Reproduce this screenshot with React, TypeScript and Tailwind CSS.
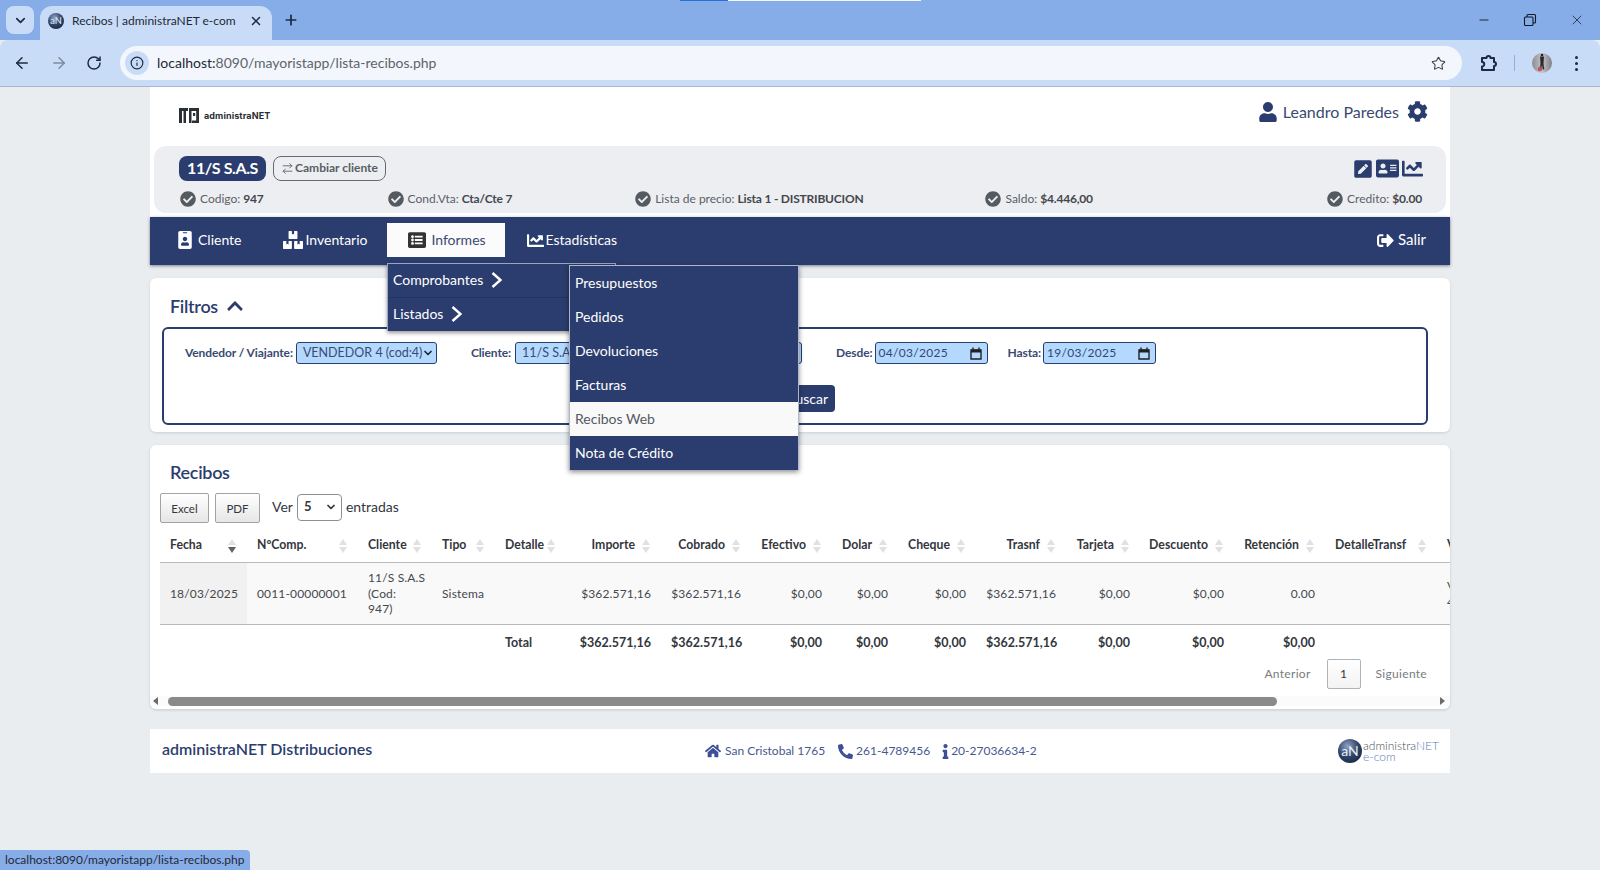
import React from "react";
import { ChevronDown, X, Plus, ArrowLeft, ArrowRight, ArrowRightLeft, RotateCw, Info, Star, Minus } from "lucide-react";
import { FaUser, FaCog, FaPenSquare, FaAddressCard, FaChartLine, FaCheckCircle, FaIdBadge, FaBoxes, FaListAlt, FaSignOutAlt, FaChevronUp, FaHome, FaPhoneAlt, FaInfo, FaSearch } from "react-icons/fa";

const Sphere = ({ size }: { size: number }) => (
  <svg width={size} height={size} viewBox="0 0 24 24" className="shrink-0">
    <defs>
      <radialGradient id={`sph${size}`} cx="0.4" cy="0.3" r="0.8">
        <stop offset="0" stopColor="#8fa3c4" />
        <stop offset="0.55" stopColor="#2f4468" />
        <stop offset="1" stopColor="#17243f" />
      </radialGradient>
    </defs>
    <circle cx="12" cy="12" r="12" fill={`url(#sph${size})`} />
    <text x="12" y="17" textAnchor="middle" fontSize="14" fill="#e8eef7" fontFamily="Lato, sans-serif">aN</text>
  </svg>
);

const Chevron = () => (
  <svg width="11" height="16" viewBox="0 0 11 16" fill="none" stroke="white" strokeWidth="2.4" className="shrink-0">
    <path d="M1.5 1l8 7-8 7" />
  </svg>
);

const Info2 = ({ label, value, className = "" }: { label: string; value: string; className?: string }) => (
  <div className={`flex items-center gap-[3px] text-[12px] text-[#5b6068] whitespace-nowrap ${className}`}>
    <FaCheckCircle className="text-[16px] text-[#555a60] mr-[1px]" />
    <span>{label} <b className="font-bold tracking-[-0.2px] text-[#43474d]">{value}</b></span>
  </div>
);

const NavItem = ({ icon, label, gap = "gap-[6px]" }: { icon: React.ReactNode; label: string; gap?: string }) => (
  <div className={`flex items-center ${gap} px-[20px] h-[34px] text-white text-[14px] whitespace-nowrap`}>
    {icon}
    <span className="-mt-[2px]">{label}</span>
  </div>
);

const columns: { label: string; width: number; right?: boolean }[] = [
  { label: "Fecha", width: 87 },
  { label: "NºComp.", width: 111 },
  { label: "Cliente", width: 74 },
  { label: "Tipo", width: 63 },
  { label: "Detalle", width: 71 },
  { label: "Importe", width: 95, right: true },
  { label: "Cobrado", width: 90, right: true },
  { label: "Efectivo", width: 81, right: true },
  { label: "Dolar", width: 66, right: true },
  { label: "Cheque", width: 78, right: true },
  { label: "Trasnf", width: 90, right: true },
  { label: "Tarjeta", width: 74, right: true },
  { label: "Descuento", width: 94, right: true },
  { label: "Retención", width: 91, right: true },
  { label: "DetalleTransf", width: 112 },
  { label: "V", width: 60 },
];

const rowCells: React.ReactNode[] = [
  "18/03/2025", "0011-00000001",
  <>11/S S.A.S<br />(Cod:<br />947)</>,
  "Sistema", "", "$362.571,16", "$362.571,16", "$0,00", "$0,00", "$0,00", "$362.571,16", "$0,00", "$0,00", "0.00", "",
  <>V<br />4</>,
];
const totalCells = ["", "", "", "", "Total", "$362.571,16", "$362.571,16", "$0,00", "$0,00", "$0,00", "$362.571,16", "$0,00", "$0,00", "$0,00", "", ""];

const Sort = ({ active }: { active?: boolean }) => (
  <span className="absolute right-[11px] top-[16px] flex flex-col gap-[2px]">
    <span className="block w-0 h-0 border-x-[4px] border-x-transparent border-b-[6px] border-b-[#dfe1e3]" />
    <span className={`block w-0 h-0 border-x-[4px] border-x-transparent border-t-[6px] ${active ? "border-t-[#5f6368]" : "border-t-[#dfe1e3]"}`} />
  </span>
);

const DateInput = ({ value }: { value: string }) => (
  <div className="w-[113px] h-[22px] bg-[#b3d9ff] border border-[#2b3d6e] rounded-[3px] flex items-center justify-between pl-[3px] pr-[5px] text-[12px] tracking-[0.3px] font-normal text-[#34466f]">
    <span>{value}</span>
    <svg width="12" height="13" viewBox="0 0 12 13" className="shrink-0">
      <path d="M1 3h10v9H1z" fill="none" stroke="#222" strokeWidth="1.4" />
      <path d="M1 2.5h10v3H1z" fill="#222" />
      <path d="M3 .5v2M9 .5v2" stroke="#222" strokeWidth="1.4" />
    </svg>
  </div>
);

const subItems = ["Presupuestos", "Pedidos", "Devoluciones", "Facturas", "Recibos Web", "Nota de Crédito"];

export default function App() {
  return (
    <div className="relative w-[1600px] h-[870px] overflow-hidden flex flex-col bg-[#e9edf0] [font-family:Lato,sans-serif] text-[#2b3d6e]">
      {/* Tab strip */}
      <div className="relative h-[40px] bg-[#87ade9] flex items-start shrink-0 [font-family:'Open_Sans',sans-serif]">
        <div className="absolute left-[680px] top-0 h-[1px] w-[48px] bg-[#2a6fd6]" />
        <div className="absolute left-[728px] top-0 h-[1px] w-[193px] bg-[#f2f6fc]" />
        <div className="ml-[6px] mt-[6px] w-[28px] h-[28px] rounded-lg bg-[#c9dcf7] flex items-center justify-center">
          <ChevronDown size={15} strokeWidth={2.6} className="text-[#1c2a3f]" />
        </div>
        <div className="ml-[6px] mt-[6px] w-[232px] h-[34px] rounded-t-xl bg-[#c9dcf7] flex items-center pl-[8px] pr-[9px] pb-[4px]">
          <Sphere size={16} />
          <span className="ml-[8px] text-[12px] text-[#1f2937] whitespace-nowrap flex-1">Recibos | administraNET e-com</span>
          <X size={14} strokeWidth={2.6} className="text-[#1c2a3f]" />
        </div>
        <Plus size={16} strokeWidth={2.6} className="ml-[11px] mt-[12px] text-[#1c2a3f]" />
        <div className="ml-auto flex items-center h-[40px] pr-[15px] gap-[32px] text-[#111827]">
          <Minus size={14} strokeWidth={1.5} />
          <svg width="14" height="14" viewBox="0 0 14 14" fill="none" stroke="#111827" strokeWidth="1.1">
            <rect x="1.5" y="4" width="8.5" height="8.5" rx="1" />
            <path d="M4 4V2.5a1 1 0 0 1 1-1h6.5a1 1 0 0 1 1 1V9a1 1 0 0 1-1 1H10" />
          </svg>
          <X size={16} strokeWidth={1.1} />
        </div>
      </div>
      {/* Toolbar */}
      <div className="h-[47px] shrink-0 bg-[#c9dcf7] border-b border-[#a9b5c8] rounded-tl-lg rounded-tr-lg flex items-center [font-family:'Open_Sans',sans-serif]">
        <ArrowLeft size={18} strokeWidth={2} className="ml-[13px] text-[#1c2a3f]" />
        <ArrowRight size={18} strokeWidth={2} className="ml-[19px] text-[#7d8ba0]" />
        <RotateCw size={16} strokeWidth={2.2} className="ml-[18px] text-[#1c2a3f]" />
        <div className="ml-[18px] w-[1342px] h-[34px] rounded-full bg-[#f3f7fd] flex items-center pl-[5px] pr-[16px]">
          <div className="w-[24px] h-[24px] rounded-full bg-[#c9dcf7] flex items-center justify-center">
            <Info size={14} strokeWidth={2} className="text-[#1c2a3f]" />
          </div>
          <span className="ml-[8px] -mt-[2px] text-[14px] text-[#5f6368]"><span className="text-[#1f2937]">localhost:</span>8090/mayoristapp/lista-recibos.php</span>
          <Star size={15} strokeWidth={1.7} className="ml-auto text-[#3c4043]" />
        </div>
        <svg width="18" height="18" viewBox="0 0 18 18" fill="none" stroke="#1c2a3f" strokeWidth="2" strokeLinejoin="round" className="ml-[17px]">
          <path d="M3 4h4.5a2 2 0 0 1 4 0H15v4a2 2 0 0 1 0 4v4H3v-3.5a2.2 2.2 0 0 0 0-4.5z" />
        </svg>
        <div className="ml-[17px] w-[1px] h-[16px] bg-[#8fb0e4]" />
        <svg width="20" height="20" viewBox="0 0 20 20" className="ml-[17px] shrink-0">
          <defs>
            <clipPath id="av"><circle cx="10" cy="10" r="10" /></clipPath>
            <linearGradient id="avbg" x1="0" x2="1" y1="0" y2="0">
              <stop offset="0" stopColor="#8d8a90" />
              <stop offset="0.5" stopColor="#c4c3c8" />
              <stop offset="1" stopColor="#807e86" />
            </linearGradient>
          </defs>
          <g clipPath="url(#av)">
            <rect width="20" height="20" fill="url(#avbg)" />
            <circle cx="10" cy="2" r="1.3" fill="#222" />
            <path d="M8 3.5h4l-.5 7 .8 6h-1.6L10 11.5 9.3 16.5H7.7l.8-6z" fill="#2a2a2e" />
            <circle cx="8" cy="16" r="2.2" fill="#c05060" />
          </g>
        </svg>
        <div className="ml-[23px] flex flex-col gap-[3px]">
          <span className="w-[3px] h-[3px] rounded-full bg-[#1c2a3f]" />
          <span className="w-[3px] h-[3px] rounded-full bg-[#1c2a3f]" />
          <span className="w-[3px] h-[3px] rounded-full bg-[#1c2a3f]" />
        </div>
      </div>

      {/* Page */}
      <div className="w-[1300px] mx-auto flex flex-col">
        {/* Header */}
        <div className="bg-white pb-[4px]">
          <div className="h-[59px] flex items-center justify-between pl-[29px] pr-[22px]">
            <div className="flex items-center gap-[5px] -mt-[2px]">
              <svg width="20" height="15" viewBox="0 0 20 15" fill="#2a2e35">
                <path d="M0 0h9v3H7v12H4.5V3H3v12H0zM10 0h10v15h-7v-2.5h4.2V3H12.5v12H10z" />
                <path d="M14 5h2.2v3H14z" />
              </svg>
              <span className="[font-family:Inter,sans-serif] text-[9px] font-bold text-[#2a2e35] tracking-[0.1px]">administraNET</span>
            </div>
            <div className="flex items-center -mt-[10px]">
              <FaUser className="text-[20px] text-[#2b3d6e]" />
              <span className="ml-[5px] text-[16px] text-[#3a4a72]">Leandro Paredes</span>
              <FaCog className="ml-[8px] text-[21px] text-[#2b3d6e]" />
            </div>
          </div>
          <div className="mx-[4px] h-[67px] rounded-xl bg-[#eceef2] pl-[26px] pr-[24px] pt-[10px]">
            <div className="flex items-center h-[25px] -ml-[1px]">
              <div className="w-[87px] h-[25px] pb-[1px] rounded-lg bg-[#2b3d6e] text-white text-[16px] font-bold flex items-center justify-center whitespace-nowrap tracking-[-0.4px]">11/S S.A.S</div>
              <div className="ml-[7px] -mt-[1px] w-[113px] h-[25px] rounded-lg border border-[#666a70] text-[#595e65] text-[12px] font-bold flex items-center justify-center gap-[1px] whitespace-nowrap">
                <ArrowRightLeft size={13} strokeWidth={1.6} />
                Cambiar cliente
              </div>
              <div className="ml-auto flex items-center gap-[3px] text-[#2b3d6e] -mr-[1px]">
                <FaPenSquare className="text-[20px]" />
                <FaAddressCard className="text-[23px]" />
                <FaChartLine className="text-[21px]" />
              </div>
            </div>
            <div className="flex items-center mt-[9px] gap-[124px]">
              <Info2 label="Codigo:" value="947" />
              <Info2 label="Cond.Vta:" value="Cta/Cte 7" />
              <Info2 label="Lista de precio:" value="Lista 1 - DISTRIBUCION" className="-ml-[1px]" />
              <Info2 label="Saldo:" value="$4.446,00" className="-ml-[2px]" />
              <div className="ml-auto">
                <Info2 label="Credito:" value="$0.00" />
              </div>
            </div>
          </div>
        </div>

        {/* Navbar */}
        <div className="relative h-[48px] bg-[#2b3d6e] shadow-[0_1px_3px_rgba(0,0,0,0.45)] flex items-center pl-[6px] pr-[24px] pb-[2px] z-10">
          <NavItem icon={<FaIdBadge className="text-[18px]" />} label="Cliente" gap="gap-[4px]" />
          <div className="ml-[1px]">
            <NavItem icon={<FaBoxes className="text-[20px]" />} label="Inventario" gap="gap-[3px]" />
          </div>
          <div className="-ml-[1px] flex items-center gap-[5px] w-[118px] justify-center h-[34px] pl-[3px] bg-[#fbfbfb] text-[14px] text-[#3a4a72]">
            <FaListAlt className="text-[18px] text-[#333]" />
            <span className="-mt-[2px]">Informes</span>
          </div>
          <div className="ml-[2px]">
            <NavItem icon={<FaChartLine className="text-[17px]" />} label="Estadísticas" gap="gap-[2px]" />
          </div>
          <div className="ml-auto flex items-center gap-[4px] text-white text-[15px]">
            <FaSignOutAlt className="text-[17px]" />
            <span className="-mt-[2px]">Salir</span>
          </div>
          {/* Open menus */}
          <div className="absolute left-[237px] top-[46px] w-[229px] h-[68px] bg-[#2b3d6e] border-t border-x border-[#9aa5bf] shadow-[0_2px_4px_rgba(0,0,0,0.4)] text-white text-[14px]">
            <div className="h-[34px] flex items-center pl-[5px] pb-[2px] gap-[8px] border-b border-[#24335c]">
              <span>Comprobantes</span>
              <Chevron />
            </div>
            <div className="h-[33px] flex items-center pl-[5px] pb-[2px] gap-[8px]">
              <span>Listados</span>
              <Chevron />
            </div>
          </div>
          <div className="absolute left-[419px] top-[48px] w-[230px] bg-[#2b3d6e] border-t border-x border-[#aeb6c9] shadow-[0_2px_5px_rgba(0,0,0,0.45)] text-[14px] text-white">
            {subItems.map((s) => (
              <div key={s} className={`h-[34px] flex items-center pl-[5px] pb-[2px] ${s === "Recibos Web" ? "bg-[#f9f9f9] text-[#555a62]" : ""}`}>{s}</div>
            ))}
          </div>
        </div>

        {/* Filters card */}
        <div className="mt-[13px] h-[154px] bg-white rounded-md shadow-[0_1px_3px_rgba(0,0,0,0.12)] pt-[15px] pl-[12px] pr-[22px]">
          <div className="flex items-center pl-[8px] h-[26px] text-[18px] font-semibold tracking-[-0.3px] text-[#2b3d6e]">
            Filtros
            <FaChevronUp className="ml-[8px] text-[18px]" />
          </div>
          <div className="mt-[8px] h-[98px] border-2 border-[#2b3d6e] rounded-md pt-[13px]">
            <div className="flex items-center text-[12px] font-bold tracking-[-0.1px] text-[#3a4a72] pl-[21px] h-[22px] whitespace-nowrap">
              <span>Vendedor / Viajante:</span>
              <div className="ml-[3px] w-[141px] h-[22px] bg-[#b3d9ff] border border-[#2b3d6e] rounded-[3px] flex items-center justify-between pl-[6px] pr-[2px] text-[12.5px] tracking-normal font-normal">
                <span>VENDEDOR 4 (cod:4)</span>
                <ChevronDown size={12} strokeWidth={3.5} className="text-[#1c2a3f] shrink-0" />
              </div>
              <span className="ml-[34px]">Cliente:</span>
              <div className="ml-[4px] w-[287px] h-[22px] bg-[#b3d9ff] border border-[#2b3d6e] rounded-[3px] flex items-center pl-[6px] text-[12.5px] tracking-normal font-normal">
                <span>11/S S.A.S (Cod: 947)</span>
              </div>
              <span className="ml-[34px]">Desde:</span>
              <div className="ml-[2px]"><DateInput value="04/03/2025" /></div>
              <span className="ml-[20px]">Hasta:</span>
              <div className="ml-[2px]"><DateInput value="19/03/2025" /></div>
            </div>
            <div className="mt-[21px] flex justify-center pr-[10px]">
              <div className="w-[90px] h-[27px] rounded-[4px] bg-[#2b3d6e] text-white text-[14px] flex items-center justify-end gap-[5px] pr-[7px]">
                <FaSearch className="text-[12px]" />
                Buscar
              </div>
            </div>
          </div>
        </div>

        {/* Table card */}
        <div className="mt-[13px] h-[264px] bg-white rounded-md shadow-[0_1px_3px_rgba(0,0,0,0.15)] flex flex-col overflow-hidden">
          <div className="pl-[20px] pt-[14px] h-[48px] text-[18px] font-semibold tracking-[-0.3px] text-[#2b3d6e]">Recibos</div>
          <div className="flex items-center pl-[10px] h-[30px] text-[#33373d] text-[14px]">
            <div className="w-[49px] h-[30px] pt-[2px] border border-[#a0a3a7] rounded-[2px] bg-gradient-to-b from-white to-[#e6e6e6] flex items-center justify-center text-[11.5px]">Excel</div>
            <div className="ml-[6px] w-[45px] h-[30px] pt-[2px] border border-[#a0a3a7] rounded-[2px] bg-gradient-to-b from-white to-[#e6e6e6] flex items-center justify-center text-[11.5px]">PDF</div>
            <span className="ml-[12px] -mt-[3px]">Ver</span>
            <div className="ml-[4px] -mt-[2px] w-[45px] h-[27px] border border-[#8c8f94] rounded-[4px] bg-white flex items-center justify-between pl-[6px] pr-[4px] font-bold text-[13px]">
              5
              <ChevronDown size={12} strokeWidth={3.5} />
            </div>
            <span className="ml-[4px] -mt-[3px]">entradas</span>
          </div>
          <div className="pl-[10px] overflow-hidden w-[1300px]">
            <table className="table-fixed border-collapse w-[1317px] text-[12px] tracking-[0.15px] text-[#44484e]">
              <colgroup>
                {columns.map((c) => (
                  <col key={c.label} style={{ width: c.width }} />
                ))}
              </colgroup>
              <thead>
                <tr className="h-[39px] border-b border-[#b8bbbe]">
                  {columns.map((c, i) => (
                    <th key={c.label} className={`relative p-0 pt-[6px] text-[12.25px] tracking-normal font-bold text-[#33373d] whitespace-nowrap ${c.right ? "text-right pr-[26px]" : "text-left pl-[10px]"}`}>
                      {c.label}
                      {i < 15 && <Sort active={i === 0} />}
                    </th>
                  ))}
                </tr>
              </thead>
              <tbody>
                <tr className="h-[62px] bg-[#f9f9f9] border-b border-[#b8bbbe]">
                  {rowCells.map((v, i) => (
                    <td key={i} className={`pt-[1px] pb-0 px-[10px] leading-[15.5px] whitespace-nowrap ${i === 0 ? "bg-[#f1f1f1]" : ""} ${columns[i].right ? "text-right" : "text-left"}`}>{v}</td>
                  ))}
                </tr>
                <tr className="h-[35px]">
                  {totalCells.map((v, i) => (
                    <td key={i} className={`pt-[4px] pb-0 px-[10px] font-bold text-[12.5px] tracking-normal text-[#33373d] ${columns[i].right ? "text-right" : "text-left"}`}>{v}</td>
                  ))}
                </tr>
              </tbody>
            </table>
          </div>
          <div className="flex items-center justify-end pr-[23px] h-[30px] text-[12px] text-[#777b80] tracking-[0.3px]">
            <span>Anterior</span>
            <div className="ml-[16px] mr-[15px] w-[34px] h-[30px] border border-[#b0b3b6] rounded-[2px] bg-gradient-to-b from-white to-[#f3f3f3] flex items-center justify-center text-[#33373d]">1</div>
            <span>Siguiente</span>
          </div>
          <div className="mt-[7px] h-[10px] flex items-center pl-[3px] pr-[5px] bg-[#fbfbfb]">
            <span className="w-0 h-0 border-y-[4px] border-y-transparent border-r-[5px] border-r-[#6a6a6a]" />
            <div className="ml-[10px] w-[1109px] h-[9px] rounded-full bg-[#8a8a8a]" />
            <span className="ml-auto w-0 h-0 border-y-[4px] border-y-transparent border-l-[5px] border-l-[#6a6a6a]" />
          </div>
        </div>

        {/* Footer */}
        <div className="mt-[20px] h-[44px] bg-white flex items-center pl-[12px] pr-[11px]">
          <span className="text-[16px] font-semibold text-[#2b3d6e] w-[543px] pb-[5px]">administraNET Distribuciones</span>
          <div className="flex items-center text-[12px] text-[#46598f] whitespace-nowrap">
            <FaHome className="text-[16px] text-[#3d4f96]" />
            <span className="ml-[4px]">San Cristobal 1765</span>
            <FaPhoneAlt className="ml-[13px] text-[15px] text-[#3d4f96]" />
            <span className="ml-[3px]">261-4789456</span>
            <FaInfo className="ml-[8px] text-[15px] text-[#3d4f96]" />
            <span className="-ml-[2px]">20-27036634-2</span>
          </div>
          <div className="ml-auto flex items-center">
            <Sphere size={24} />
            <div className="ml-[1px] flex flex-col leading-[11px] text-[12px] font-light text-[#4a4f58]">
              <span className="whitespace-nowrap">administra<span className="text-[#5c7fb8]">NET</span></span>
              <span className="text-[#5c7fb8] text-[12px]">e-com</span>
            </div>
          </div>
        </div>
      </div>

      {/* Status bubble */}
      <div className="absolute left-0 bottom-0 w-[250px] h-[20px] bg-[#87ade9] rounded-tr-[4px] flex items-center pl-[5px] text-[12px] whitespace-nowrap text-[#1f2937] [font-family:'Open_Sans',sans-serif]">
        localhost:8090/mayoristapp/lista-recibos.php
      </div>
    </div>
  );
}
